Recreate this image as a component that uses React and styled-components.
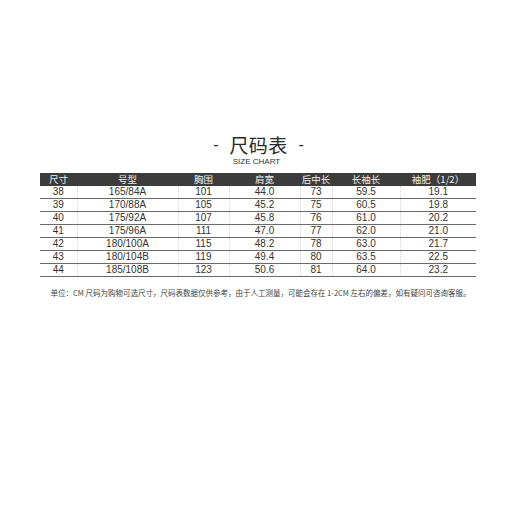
import React from "react";
import styled, { createGlobalStyle } from "styled-components";

const GlobalStyle = createGlobalStyle`
    html, body {
        margin: 0;
        padding: 0;
        background: #ffffff;
    }
    body {
        width: 520px;
        height: 520px;
        font-family: "Liberation Sans", "Noto Sans CJK SC", sans-serif;
    }
`;

const columns = [
    { title: "尺寸", width: 37 },
    { title: "号型", width: 101 },
    { title: "胸围", width: 51 },
    { title: "肩宽", width: 71 },
    { title: "后中长", width: 32 },
    { title: "长袖长", width: 68 },
    { title: "袖肥（1/2）", width: 76 },
];

const rows = [
    ["38", "165/84A", "101", "44.0", "73", "59.5", "19.1"],
    ["39", "170/88A", "105", "45.2", "75", "60.5", "19.8"],
    ["40", "175/92A", "107", "45.8", "76", "61.0", "20.2"],
    ["41", "175/96A", "111", "47.0", "77", "62.0", "21.0"],
    ["42", "180/100A", "115", "48.2", "78", "63.0", "21.7"],
    ["43", "180/104B", "119", "49.4", "80", "63.5", "22.5"],
    ["44", "185/108B", "123", "50.6", "81", "64.0", "23.2"],
];

export default function App() {
    return (
        <Page>
            <GlobalStyle />
            <Title>
                <Dash>-</Dash>
                <TitleText>尺码表</TitleText>
                <Dash>-</Dash>
            </Title>
            <SubTitle>SIZE CHART</SubTitle>
            <Table>
                <colgroup>
                    {columns.map((c) => (
                        <col key={c.title} style={{ width: c.width }} />
                    ))}
                </colgroup>
                <thead>
                    <tr>
                        {columns.map((c) => (
                            <HeadCell key={c.title}>{c.title}</HeadCell>
                        ))}
                    </tr>
                </thead>
                <tbody>
                    {rows.map((r) => (
                        <tr key={r[0]}>
                            {r.map((v, i) => (
                                <Cell key={i}>{v}</Cell>
                            ))}
                        </tr>
                    ))}
                </tbody>
            </Table>
            <Note>
                单位：CM 尺码为购物可选尺寸，尺码表数据仅供参考，由于人工测量，可能会存在 1-2CM 左右的偏差，如有疑问可咨询客服。
            </Note>
        </Page>
    );
}

const Page = styled.div`
    display: flex;
    flex-direction: column;
    align-items: center;
    padding-top: 135px;
`;

const Title = styled.div`
    display: flex;
    align-items: center;
    gap: 11px;
    height: 20px;
    color: #2a2a2a;
    margin-right: 3px;
`;

const Dash = styled.span`
    font-family: "Liberation Sans", sans-serif;
    font-size: 16px;
    line-height: 20px;
`;

const TitleText = styled.span`
    font-family: "Noto Sans CJK SC", sans-serif;
    font-size: 19px;
    line-height: 20px;
    letter-spacing: 0.3px;
`;

const SubTitle = styled.div`
    margin-top: 2px;
    font-family: "Liberation Sans", sans-serif;
    font-size: 8px;
    line-height: 10px;
    color: #333;
    margin-right: 7px;
`;

const Table = styled.table`
    margin-top: 6px;
    width: 436px;
    table-layout: fixed;
    border-collapse: collapse;
    margin-right: 4px;
`;

const HeadCell = styled.th`
    height: 13px;
    padding: 0;
    background: #3c3c3c;
    color: #f0f0f0;
    font-family: "Noto Sans CJK SC", sans-serif;
    font-weight: normal;
    font-size: 9.5px;
    line-height: 13px;
    text-align: center;
    white-space: nowrap;
`;

const Cell = styled.td`
    height: 12px;
    padding: 0;
    font-family: "Liberation Sans", "Noto Sans CJK SC", sans-serif;
    font-size: 10px;
    line-height: 11.5px;
    color: #333;
    text-align: center;
    border-bottom: 1px solid #6a6a6a;
    border-left: 1px dotted #d8d8d8;
    &:first-child {
        border-left: none;
    }
`;

const Note = styled.div`
    margin-top: 11px;
    font-family: "Noto Sans CJK SC", sans-serif;
    font-size: 7.5px;
    line-height: 10px;
    color: #444;
    white-space: nowrap;
    margin-left: 1px;
`;
